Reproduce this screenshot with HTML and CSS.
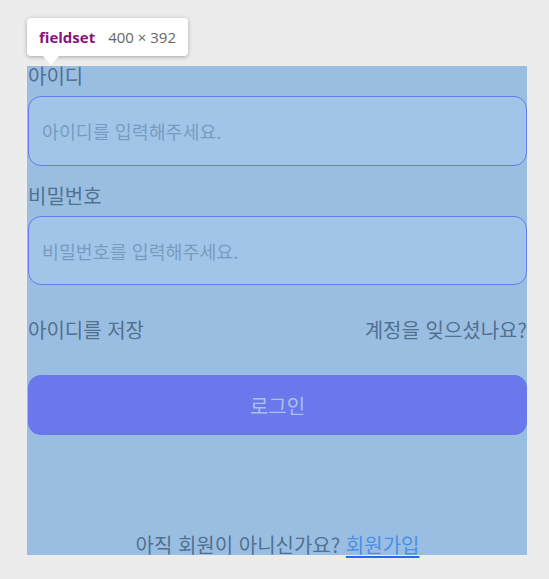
FILE: index.html
```html
<!DOCTYPE html>
<html lang="ko">
<head>
<meta charset="utf-8">
<link rel="stylesheet" href="styles.css">
</head>
<body>
<div class="page">
  <fieldset class="form">
    <label class="label">아이디</label>
    <div class="input"><span class="ph">아이디를 입력해주세요.</span></div>
    <label class="label label-gap">비밀번호</label>
    <div class="input"><span class="ph">비밀번호를 입력해주세요.</span></div>
    <div class="row">
      <span>아이디를 저장</span>
      <span>계정을 잊으셨나요?</span>
    </div>
    <div class="btn">로그인</div>
    <p class="signup">아직 회원이 아니신가요? <a class="link">회원가입</a></p>
  </fieldset>
  <div class="tip">
    <span class="tip-name">fieldset</span>
    <span class="tip-size">400 × 392</span>
    <span class="tip-arrow"></span>
  </div>
</div>
</body>
</html>
```

FILE: styles.css
```css
html, body {
  margin: 0;
  padding: 0;
  background: #ececec;
}
.page {
  position: relative;
  padding: 66px 0 0 27px;
  height: 513px;
  font-family: "Noto Sans CJK KR", "Noto Sans", sans-serif;
}
.form {
  box-sizing: border-box;
  width: 500px;
  height: 489px;
  margin: 0;
  padding: 0 0 0 1px;
  border: 0;
  background: #9abee2;
  display: flex;
  flex-direction: column;
  font-size: 20px;
  color: #52708f;
}
.label {
  display: block;
  line-height: 20px;
  height: 20px;
}
.label-gap {
  margin-top: 20px;
}
.input {
  box-sizing: border-box;
  margin-top: 10px;
  height: 70px;
  border: 1px solid #6b7aea;
  border-radius: 13px;
  background: #a0c5e9;
  display: flex;
  align-items: center;
  padding: 0 0 0 13px;
  font-size: 18.4px;
}
.ph {
  color: #7a9bc0;
  line-height: 20px;
  margin-top: 1px;
}
.row {
  margin-top: 35px;
  display: flex;
  justify-content: space-between;
  line-height: 20px;
  height: 20px;
}
.btn {
  margin-top: 35px;
  height: 60px;
  border-radius: 13px;
  background: #6a78eb;
  color: #a6c2e8;
  display: flex;
  align-items: center;
  justify-content: center;
}
.signup {
  margin: 100px 0 0;
  text-align: center;
  line-height: 20px;
  height: 20px;
}
.link {
  color: #4b8fe8;
  text-decoration: underline;
  text-decoration-color: #1a6ff0;
  text-decoration-thickness: 2px;
  text-underline-offset: 3px;
}
.tip {
  position: absolute;
  left: 27px;
  top: 18px;
  width: 161px;
  height: 38px;
  box-sizing: border-box;
  background: #fff;
  border-radius: 4px;
  box-shadow: 0 1px 4px rgba(0,0,0,0.3);
  display: flex;
  align-items: center;
  padding-left: 12px;
  gap: 13px;
  font-family: "Open Sans", "Noto Sans", sans-serif;
  font-size: 15px;
}
.tip-name {
  color: #881280;
  font-weight: 700;
}
.tip-size {
  color: #666;
}
.tip-arrow {
  position: absolute;
  left: 16px;
  top: 38px;
  width: 0;
  height: 0;
  border-left: 8px solid transparent;
  border-right: 8px solid transparent;
  border-top: 9px solid #fff;
}
```
